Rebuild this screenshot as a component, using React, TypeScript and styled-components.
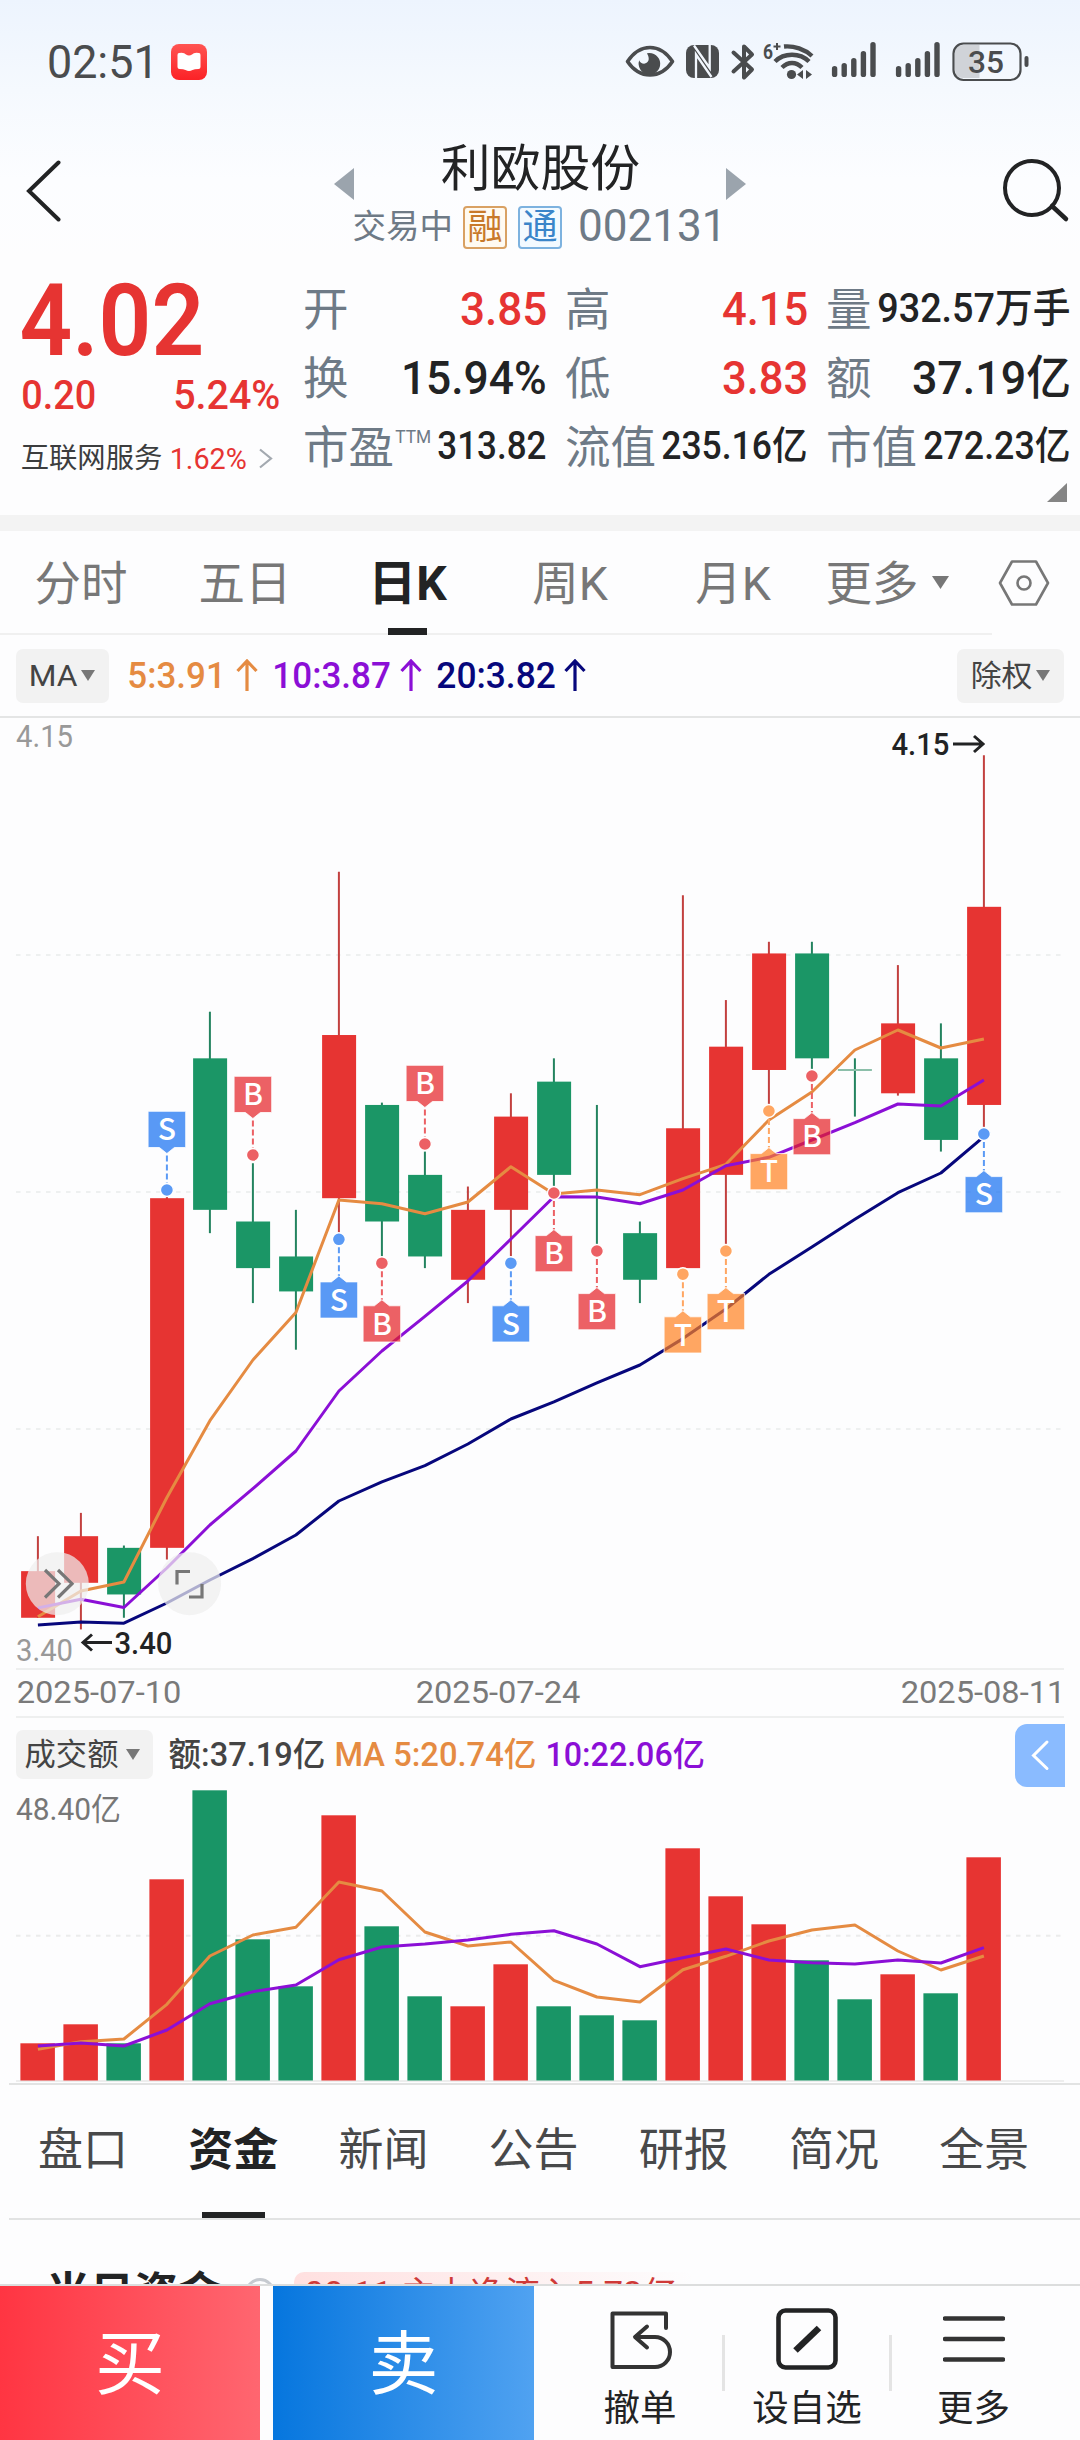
import React, { useLayoutEffect, useRef, useState } from "react";
import styled, { createGlobalStyle } from "styled-components";

const RED = "#e63432";
const GREEN = "#1b9666";
const ORANGE = "#e58b42";
const PURPLE = "#8b0fd6";
const NAVY = "#07077c";
const INK = "#222324";
const FONT = `Roboto, "Noto Sans CJK SC", "Noto Sans", sans-serif`;

const Global = createGlobalStyle`
  * { box-sizing: border-box; }
  body { margin: 0; background: #fdfdfe; font-family: ${FONT}; color: ${INK}; }
  svg { display: block; flex: none; }
`;

/* ---------- text that is squeezed to a fixed ink width ---------- */

const FitBox = styled.span<{ $w: number; $ml: number; $dy: number; $h: number }>`
  display: flex;
  flex: none;
  width: ${(p) => p.$w}px;
  height: ${(p) => p.$h}px;
  margin-left: ${(p) => p.$ml}px;
  margin-top: ${(p) => p.$dy * 2}px;
`;

const FitInner = styled.span<{ $size: number; $weight: number; $color: string }>`
  display: block;
  flex: none;
  white-space: nowrap;
  transform-origin: 0 50%;
  font-size: ${(p) => p.$size}px;
  line-height: ${(p) => Math.round(p.$size * 1.2)}px;
  font-weight: ${(p) => p.$weight};
  color: ${(p) => p.$color};
`;

type FitProps = {
  w: number;
  size: number;
  weight?: number;
  color?: string;
  ml?: number;
  dy?: number;
  children: React.ReactNode;
};

function Fit({ w, size, weight = 400, color = INK, ml = 0, dy = 0, children }: FitProps) {
  const ref = useRef<HTMLSpanElement>(null);
  const [scale, setScale] = useState(1);
  const bearing = size * 0.045;
  useLayoutEffect(() => {
    if (ref.current) setScale((w + bearing * 2) / ref.current.offsetWidth);
  }, [w, bearing]);
  return (
    <FitBox $w={w} $ml={ml} $dy={dy} $h={Math.round(size * 1.2)}>
      <FitInner
        ref={ref}
        $size={size}
        $weight={weight}
        $color={color}
        style={{ transform: `translateX(${-bearing}px) scaleX(${scale})` }}
      >
        {children}
      </FitInner>
    </FitBox>
  );
}

/* ---------- page ---------- */

const Page = styled.div`
  width: 1080px;
  height: 2440px;
  overflow: hidden;
  display: flex;
  flex-direction: column;
  background: linear-gradient(#edf4fe 0, #f5f9fe 90px, #fcfdff 180px, #fdfdfe 260px);
`;

const StatusBar = styled.div`
  height: 124px;
  flex: none;
  display: flex;
  align-items: center;
  padding-left: 49px;
`;

const AppBadge = styled.div`
  margin-left: 14px;
  width: 36px;
  height: 36px;
  border-radius: 8px;
  background: linear-gradient(#ff5452, #fb2226);
  display: flex;
  align-items: center;
  justify-content: center;
`;

const StatusIconsWrap = styled.div`
  margin-left: 418px;
`;

function StatusIcons() {
  const c = "#4a4c4e";
  const bars = (x: number) =>
    [11, 14, 19, 26, 35].map((h, i) => (
      <line key={x + i} x1={x + i * 9.6} x2={x + i * 9.6} y1={36.2 - h + 2.6} y2={33.4} stroke={c} strokeWidth="5.4" strokeLinecap="round" />
    ));
  return (
    <svg width="406" height="42" viewBox="0 0 406 42">
      <path d="M2.500 20.500C9 11 17 6.500 25 6.500s16 4.500 22.500 14C41 30 33 34 25 34S9 30 2.500 20.500Z" fill="none" stroke={c} strokeWidth="3.600" strokeLinejoin="round" />
      <path d="M22 12.200a10.800 10.800 0 1 1-7.800 7c1 3 5 4.800 7.800 2.400 3-2.600 1.500-6.400 0-9.400Z" fill={c} />
      <rect x="61" y="4" width="33" height="33" rx="8" fill={c} />
      <path d="M71 37V13.500L86.500 36M84.700 4V27L69 4.500" fill="none" stroke="#f2f7fe" strokeWidth="2.300" />
      <path d="M108.500 11.500 127 28.500l-8 8v-31l8 8-18.500 17" fill="none" stroke={c} strokeWidth="4" strokeLinejoin="round" strokeLinecap="round" />
      <text x="138" y="17.500" fontSize="21" fontWeight="700" fill={c} textLength="10" lengthAdjust="spacingAndGlyphs">6</text>
      <path d="M148.500 5.500h7M152 2v7" stroke={c} strokeWidth="2" />
      <path d="M159 5.500c10-1 21 3 28 9.500" fill="none" stroke={c} strokeWidth="4.400" />
      <path d="M150 20.500c9-9 25-9 34 0" fill="none" stroke={c} strokeWidth="4.400" />
      <path d="M157 26.500c6-6 14-6 20 0" fill="none" stroke={c} strokeWidth="4.400" />
      <circle cx="166.500" cy="33.500" r="4.600" fill={c} />
      <path d="m172 33.500 6-4.500v9zM187 33.500l-6-4.500v9z" fill={c} />
      {bars(209.6)}
      {bars(273.6)}
      <path d="M354.500 4H338q-8 0-8 8v17q0 8 8 8h16.500Z" fill="#d0d3d8" />
      <rect x="328.500" y="2.500" width="67" height="36.500" rx="10" fill="none" stroke={c} strokeWidth="2.200" />
      <rect x="399.500" y="15" width="4" height="11" rx="2" fill={c} />
      <text x="343" y="32" fontSize="32" fontWeight="500" fill={c} textLength="36" lengthAdjust="spacingAndGlyphs">35</text>
    </svg>
  );
}

const Header = styled.header`
  height: 136px;
  flex: none;
  display: flex;
  align-items: flex-start;
`;

const HeaderIcon = styled.div<{ $ml: number; $mt: number }>`
  margin-left: ${(p) => p.$ml}px;
  margin-top: ${(p) => p.$mt}px;
`;

const TitleBlock = styled.div`
  width: 372px;
  display: flex;
  flex-direction: column;
`;

const Name = styled.div`
  padding-left: 89px;
  padding-top: 15px;
  display: flex;
  height: 80px;
`;

const SubRow = styled.div`
  display: flex;
  align-items: center;
  height: 46px;
`;

const Tag = styled.span<{ $fg: string; $line: string; $bg: string }>`
  width: 44px;
  height: 43px;
  margin-left: 11px;
  border: 2px solid ${(p) => p.$line};
  border-radius: 4px;
  background: ${(p) => p.$bg};
  color: ${(p) => p.$fg};
  font-size: 35px;
  line-height: 39px;
  text-align: center;
  flex: none;
`;

const Quote = styled.section`
  height: 255px;
  flex: none;
  display: flex;
  padding-left: 22px;
`;

const PriceCol = styled.div`
  width: 281px;
  flex: none;
  display: flex;
  flex-direction: column;
`;

const PriceRow = styled.div<{ $h: number }>`
  display: flex;
  align-items: center;
  height: ${(p) => p.$h}px;
`;

const StatGrid = styled.div`
  display: grid;
  grid-template-columns: 242px 241px 243px;
  grid-template-rows: 69px 69px 69px 48px;
  column-gap: 20px;
  padding-top: 15px;
`;

const Stat = styled.div`
  display: flex;
  align-items: center;
  justify-content: space-between;
`;

const StatLabel = styled.span`
  display: flex;
  margin-top: 3px;
  font-size: 45.500px;
  line-height: 56px;
  color: #6e7a86;
`;

const Sup = styled.span`
  align-self: flex-start;
  margin: 5px 0 0 2px;
`;

const Corner = styled.div`
  grid-column: 3;
  width: 20px;
  height: 19px;
  margin: 1px 0 0 221px;
  background: #858585;
  clip-path: polygon(100% 0, 100% 100%, 0 100%);
`;

const Band = styled.div`
  height: 16px;
  flex: none;
  background: #f3f3f3;
`;

/* ---------- period tabs ---------- */

const Periods = styled.nav`
  height: 104px;
  flex: none;
  display: flex;
  padding-left: 35px;
  background: linear-gradient(#f0f0f0, #f0f0f0) 0 100% / 992px 2px no-repeat;
`;

const Period = styled.div<{ $w: number; $gap: number; $on?: boolean }>`
  width: ${(p) => p.$w}px;
  margin-right: ${(p) => p.$gap}px;
  display: flex;
  flex-direction: column;
  align-items: center;
  justify-content: space-between;
  padding-top: 25px;
  color: ${(p) => (p.$on ? INK : "#777")};
  font-weight: ${(p) => (p.$on ? 700 : 400)};
  font-size: ${(p) => (p.$on ? 48 : 46.5)}px;
  line-height: 56px;
  white-space: nowrap;
`;

const Underline = styled.i<{ $w: number; $h: number }>`
  display: block;
  width: ${(p) => p.$w}px;
  height: ${(p) => p.$h}px;
  background: ${INK};
`;

const Caret = styled.i<{ $w: number; $h: number; $ml: number; $mt?: number }>`
  display: block;
  flex: none;
  width: ${(p) => p.$w}px;
  height: ${(p) => p.$h}px;
  margin-left: ${(p) => p.$ml}px;
  margin-top: ${(p) => p.$mt ?? 0}px;
  background: #777;
  clip-path: polygon(0 0, 100% 0, 50% 100%);
`;

/* ---------- indicator bar ---------- */

const IndicatorBar = styled.div`
  height: 83px;
  flex: none;
  display: flex;
  align-items: center;
  padding: 0 16px;
  border-bottom: 2px solid #e4e5e5;
`;

const Chip = styled.div<{ $w: number; $h: number; $ml?: number }>`
  width: ${(p) => p.$w}px;
  height: ${(p) => p.$h}px;
  margin-left: ${(p) => p.$ml ?? 0}px;
  flex: none;
  border-radius: 7px;
  background: #f2f2f2;
  display: flex;
  align-items: center;
`;

const UpArrow = styled.svg<{ $ml: number }>`
  margin-left: ${(p) => p.$ml}px;
`;

const Arrow = ({ color, ml }: { color: string; ml: number }) => (
  <UpArrow width="22" height="33" viewBox="0 0 22 33" $ml={ml}>
    <path d="M11 32V3M1.500 12 11 2l9.500 10" fill="none" stroke={color} strokeWidth="3.200" />
  </UpArrow>
);

/* ---------- chart data ---------- */

type Candle = [up: boolean, high: number, top: number, bottom: number, low: number];

const candles: Candle[] = [
  [true, 3.48, 3.45, 3.41, 3.41],
  [true, 3.5, 3.48, 3.44, 3.4],
  [false, 3.472, 3.47, 3.43, 3.41],
  [true, 3.772, 3.77, 3.47, 3.46],
  [false, 3.93, 3.89, 3.76, 3.74],
  [false, 3.8, 3.75, 3.71, 3.68],
  [false, 3.76, 3.72, 3.69, 3.64],
  [true, 4.05, 3.91, 3.77, 3.74],
  [false, 3.852, 3.85, 3.75, 3.72],
  [false, 3.81, 3.79, 3.72, 3.71],
  [true, 3.78, 3.76, 3.7, 3.68],
  [true, 3.86, 3.84, 3.76, 3.72],
  [false, 3.89, 3.87, 3.79, 3.78],
  [false, 3.85, 3.77, 3.77, 3.73],
  [false, 3.75, 3.74, 3.7, 3.68],
  [true, 4.03, 3.83, 3.71, 3.71],
  [true, 3.94, 3.9, 3.79, 3.73],
  [true, 3.99, 3.98, 3.88, 3.85],
  [false, 3.99, 3.98, 3.89, 3.88],
  [false, 3.89, 3.88, 3.88, 3.84],
  [true, 3.97, 3.92, 3.86, 3.858],
  [false, 3.92, 3.89, 3.82, 3.81],
  [true, 4.15, 4.02, 3.85, 3.83],
];

const ma5 = [1616.8, 1591, 1582, 1497.5, 1420.7, 1360, 1312.5, 1200, 1203.7, 1213.7, 1202, 1166.7, 1194, 1190, 1194.7, 1178.7, 1164.3, 1120, 1092, 1050, 1030, 1048, 1039];
const ma10 = [1607.9, 1599.3, 1607.5, 1568, 1525, 1488.6, 1451, 1391, 1351, 1316.4, 1281, 1239, 1196.7, 1197, 1203.7, 1190, 1165.7, 1157.3, 1140, 1122.7, 1104, 1106, 1080];
const ma20 = [1625, 1622, 1623.2, 1603, 1580, 1558.6, 1535, 1501, 1481.8, 1465.7, 1444, 1419, 1401.8, 1382.9, 1365, 1338.6, 1309, 1274.3, 1247, 1219.3, 1192.7, 1173, 1136.7];

type Mark = [index: number, letter: "S" | "B" | "T", dotY: number, above?: boolean];
const marks: Mark[] = [
  [3, "S", 1190, true],
  [5, "B", 1155, true],
  [9, "B", 1144, true],
  [7, "S", 1239.3],
  [8, "B", 1263.2],
  [11, "S", 1263.2],
  [12, "B", 1193],
  [13, "B", 1251],
  [15, "T", 1274.2],
  [16, "T", 1251],
  [17, "T", 1111],
  [18, "B", 1076],
  [22, "S", 1134],
];
const markSolid = { S: "#5a9af5", B: "#ec6064", T: "#ffa662" };
const markFill = { S: "#136ef1", B: "#e41e23", T: "#ff801f" };

const TOP = 718;
const cx = (i: number) => 37.9 + 43 * i;
const py = (p: number) => 755.3 + (4.15 - p) * 1165.5 - TOP;
const line = (ys: number[], top: number) => ys.map((y, i) => `${cx(i).toFixed(1)},${(y - top).toFixed(1)}`).join(" ");

function Marker({ m }: { m: Mark }) {
  const [i, letter, dot, above] = m;
  const x = cx(i);
  const d = dot - TOP;
  const boxH = 36.2;
  const boxY = above ? d - 78.7 : d + 42.6;
  const l = x - 18.8;
  const r = x + 18.8;
  const shape = above
    ? `M${l} ${boxY}H${r}V${boxY + boxH}H${x + 7.5}L${x} ${boxY + boxH + 6}L${x - 7.5} ${boxY + boxH}H${l}Z`
    : `M${l} ${boxY}H${x - 7.5}L${x} ${boxY - 6}L${x + 7.5} ${boxY}H${r}V${boxY + boxH}H${l}Z`;
  return (
    <g>
      <line x1={x} x2={x} y1={above ? boxY + boxH + 8 : d + 8} y2={above ? d - 6 : boxY - 6} stroke={markSolid[letter]} strokeWidth="2" strokeDasharray="6 3" />
      <circle cx={x} cy={d} r="6.500" fill={markSolid[letter]} stroke="#fff" strokeWidth="1.400" />
      <path d={shape} fill={markFill[letter]} fillOpacity=".7" stroke="#fff" strokeOpacity=".8" strokeWidth="1" strokeLinejoin="round" />
      <text x={x} y={boxY + 28.8} textAnchor="middle" fontSize="30" fontFamily='"Noto Sans CJK SC", sans-serif' fontWeight="500" fill="#fff">
        {letter}
      </text>
    </g>
  );
}

function PriceChart() {
  return (
    <svg width="1080" height="950" viewBox="0 0 1080 950" fontFamily={FONT}>
      {[955, 1192, 1429].map((y) => (
        <line key={y} x1="16" x2="1066" y1={y - TOP} y2={y - TOP} stroke="#eef0f0" strokeWidth="2" strokeDasharray="4.500 5.500" />
      ))}
      <text x="16" y="29" fontSize="31" fill="#999" textLength="57" lengthAdjust="spacingAndGlyphs">4.15</text>
      <text x="16" y="942.500" fontSize="31" fill="#999" textLength="57" lengthAdjust="spacingAndGlyphs">3.40</text>
      {candles.map(([up, high, top, bottom, low], i) => {
        const c = up ? RED : GREEN;
        const x = cx(i);
        const flat = top === bottom;
        return (
          <g key={i}>
            <line x1={x} x2={x} y1={py(high)} y2={py(low)} stroke={up ? "#c2403f" : "#23835f"} strokeWidth="2" />
            {flat ? (
              i === 19 && <line x1={x - 17} x2={x + 17} y1={py(top)} y2={py(top)} stroke="#8cbfaa" strokeWidth="2" />
            ) : (
              <rect x={x - 16.8} y={py(top)} width="34" height={py(bottom) - py(top)} fill={c} />
            )}
          </g>
        );
      })}
      <g fill="none" strokeWidth="3" strokeLinejoin="round">
        <polyline points={line(ma5, TOP)} stroke={ORANGE} />
        <polyline points={line(ma10, TOP)} stroke={PURPLE} />
        <polyline points={line(ma20, TOP)} stroke={NAVY} />
      </g>
      {marks.map((m) => (
        <Marker key={m[0]} m={m} />
      ))}
      <text x="891.500" y="37" fontSize="31" fontWeight="500" fill={INK} textLength="58" lengthAdjust="spacingAndGlyphs">4.15</text>
      <path d="M953 26h29M974 18l9 8-9 8" fill="none" stroke={INK} strokeWidth="3" />
      <text x="114.500" y="935.500" fontSize="31" fontWeight="500" fill={INK} textLength="58" lengthAdjust="spacingAndGlyphs">3.40</text>
      <path d="M112 924.500H84M92 916.500l-9 8 9 8" fill="none" stroke={INK} strokeWidth="3" />
      <g fill="none" stroke="#777" strokeWidth="3.200">
        <circle cx="57.300" cy="865.700" r="31.500" fill="#efefef" fillOpacity=".72" stroke="none" />
        <path d="m45 852 14 13.700L45 879.500M58 852l14 13.700-14 13.800" />
        <circle cx="189.600" cy="865.700" r="31.500" fill="#efefef" fillOpacity=".72" stroke="none" />
        <path d="M177 866.500V853.500h13M202 866v13h-13" />
      </g>
    </svg>
  );
}

const DateRow = styled.div`
  height: 50px;
  flex: none;
  margin: 0 16px;
  border-top: 2px solid #eeefef;
  border-bottom: 2px solid #eeefef;
  display: flex;
  align-items: center;
  padding-bottom: 1px;
`;

/* ---------- volume ---------- */

const VolHead = styled.div`
  height: 73px;
  flex: none;
  display: flex;
  align-items: center;
  padding-left: 16px;
`;

const SideTab = styled.div`
  width: 50px;
  height: 63px;
  margin-left: 312px;
  margin-top: 1px;
  border-radius: 12px 0 0 12px;
  background: #8abbff;
  display: flex;
  align-items: center;
  justify-content: center;
`;

const VTOP = 1791;
const volumes: [boolean, number][] = [
  [true, 2043.3], [true, 2024.3], [false, 2043.3], [true, 1879.3], [false, 1790.3], [false, 1939.3],
  [false, 1986.3], [true, 1815.3], [false, 1926.3], [false, 1996.3], [true, 2006.3], [true, 1964.3],
  [false, 2006.3], [false, 2015.3], [false, 2020.3], [true, 1848.3], [true, 1896.3], [true, 1924.3],
  [false, 1960.3], [false, 1999.3], [true, 1974.3], [false, 1993.3], [true, 1857.3],
];
const vma5 = [2049.3, 2041.7, 2039, 2004.3, 1956, 1935, 1927.3, 1882, 1891, 1932, 1946, 1942, 1980.3, 1997, 2002, 1969.7, 1956.3, 1941, 1930, 1925, 1951, 1970, 1956];
const vma10 = [2046, 2043, 2046, 2030, 2003.7, 1991.7, 1985, 1959.7, 1947, 1944, 1940, 1934.3, 1930.7, 1944, 1966.7, 1957.7, 1949, 1960, 1962.7, 1964, 1960, 1963, 1947.7];

function VolumeChart() {
  return (
    <svg width="1080" height="292" viewBox="0 0 1080 292" overflow="visible" fontFamily={FONT}>
      <line x1="16" x2="1066" y1="144.700" y2="144.700" stroke="#ebecec" strokeWidth="2" strokeDasharray="4.500 5.500" />
      <line x1="16" x2="1064" y1="290" y2="290" stroke="#eeeeee" strokeWidth="2" />
      <text x="16" y="29" fontSize="31" fill="#777" textLength="105" lengthAdjust="spacingAndGlyphs">48.40亿</text>
      {volumes.map(([up, y], i) => (
        <rect key={i} x={cx(i) - 17.5} y={y - VTOP} width="34.500" height={2080.5 - y} fill={up ? "#e73432" : "#199566"} />
      ))}
      <g fill="none" strokeWidth="3" strokeLinejoin="round">
        <polyline points={line(vma5, VTOP)} stroke={ORANGE} />
        <polyline points={line(vma10, VTOP)} stroke={PURPLE} />
      </g>
    </svg>
  );
}

/* ---------- info tabs ---------- */

const InfoTabs = styled.nav`
  margin-left: 9px;
  height: 137px;
  flex: none;
  border-top: 2px solid #e2e3e3;
  border-bottom: 2px solid #e2e3e3;
  display: flex;
  padding-left: 29px;
  gap: 60.200px;
`;

const InfoTab = styled.div<{ $on?: boolean }>`
  width: 90px;
  flex: none;
  display: flex;
  flex-direction: column;
  align-items: center;
  justify-content: space-between;
  padding-top: 39px;
  font-size: 45px;
  line-height: 54px;
  color: ${(p) => (p.$on ? INK : "#48494a")};
  font-weight: ${(p) => (p.$on ? 700 : 400)};
`;

const FundRow = styled.div`
  height: 64px;
  flex: none;
  overflow: hidden;
  display: flex;
  align-items: flex-start;
  padding: 46px 0 0 46px;
`;

const FundTitle = styled.div`
  font-size: 44px;
  line-height: 56px;
  font-weight: 700;
  width: 199px;
`;

const Hint = styled.div`
  width: 30px;
  height: 30px;
  margin-top: 12px;
  border: 3px solid #c6cad0;
  border-radius: 50%;
`;

const FundPill = styled.div`
  margin-left: 19px;
  margin-top: 6px;
  width: 400px;
  height: 52px;
  border-radius: 10px;
  background: linear-gradient(90deg, #ffe0e0, #fdfdfe);
  padding: 2px 0 0 12px;
`;

/* ---------- bottom bar ---------- */

const Bottom = styled.footer`
  height: 156px;
  flex: none;
  border-top: 2px solid #dcdddd;
  display: flex;
  background: #fdfdfe;
`;

const Trade = styled.button<{ $from: string; $to: string; $w: number }>`
  width: ${(p) => p.$w}px;
  flex: none;
  border: 0;
  margin-right: 13px;
  padding: 3px 0 0;
  background: linear-gradient(90deg, ${(p) => p.$from}, ${(p) => p.$to});
  color: #fff;
  font: 400 70px/84px ${FONT};
`;

const Action = styled.div<{ $w: number; $pl?: number }>`
  width: ${(p) => p.$w}px;
  padding-left: ${(p) => p.$pl ?? 0}px;
  display: flex;
  flex-direction: column;
  align-items: center;
  padding-top: 20px;
  font-size: 36.500px;
  line-height: 46px;
`;

const ActionIcon = styled.div`
  height: 80px;
`;

const Sep = styled.i`
  width: 3px;
  height: 56px;
  margin-top: 49px;
  background: #e4e4e4;
`;

const stats: [string, string, number, number, string][] = [
  ["开", "3.85", 83, 47, RED],
  ["高", "4.15", 82, 47, RED],
  ["量", "932.57万手", 190, 40, INK],
  ["换", "15.94%", 142, 47, INK],
  ["低", "3.83", 82, 47, RED],
  ["额", "37.19亿", 155, 47, INK],
  ["市盈", "313.82", 106, 39, INK],
  ["流值", "235.16亿", 143, 39, INK],
  ["市值", "272.23亿", 144, 39, INK],
];

const dates: [string, number][] = [
  ["2025-07-10", 2],
  ["2025-07-24", 237],
  ["2025-08-11", 323],
];

export default function App() {
  return (
    <Page>
      <Global />
      <StatusBar>
        <Fit w={108} size={46} color="#4a4c4e">02:51</Fit>
        <AppBadge>
          <svg width="24" height="20" viewBox="0 0 24 20">
            <path d="M2 1q5-1 7 1.500 3 2 6 0Q17 0 22 1q1.500 0 1.500 2v12q0 2-2 2-4 0-6 1-3.500 2-7 0-2-1-6-1-2 0-2-2V3Q.5 1 2 1Z" fill="#fff" />
          </svg>
        </AppBadge>
        <StatusIconsWrap>
          <StatusIcons />
        </StatusIconsWrap>
      </StatusBar>

      <Header>
        <HeaderIcon $ml={25} $mt={36}>
          <svg width="38" height="62" viewBox="0 0 38 62">
            <path d="M33.500 2.500 4 31l29.500 28.500" fill="none" stroke={INK} strokeWidth="4" strokeLinecap="round" />
          </svg>
        </HeaderIcon>
        <HeaderIcon $ml={271} $mt={44}>
          <svg width="20" height="32" viewBox="0 0 20 32"><path d="M20 0v32L0 16Z" fill="#9ba4ad" /></svg>
        </HeaderIcon>
        <TitleBlock>
          <Name>
            <Fit w={195} size={50}>利欧股份</Fit>
          </Name>
          <SubRow>
            <Fit w={98} size={33.5} color="#6e7a86">交易中</Fit>
            <Tag $fg="#c8792a" $line="#d9a163" $bg="#fffaf1">融</Tag>
            <Tag $fg="#3a85c9" $line="#7db2df" $bg="#f3faff">通</Tag>
            <Fit w={145} size={43.5} ml={18} dy={-0.5} color="#6e7a86">002131</Fit>
          </SubRow>
        </TitleBlock>
        <HeaderIcon $ml={0} $mt={44}>
          <svg width="20" height="32" viewBox="0 0 20 32"><path d="M0 0v32l20-16Z" fill="#9ba4ad" /></svg>
        </HeaderIcon>
        <HeaderIcon $ml={256} $mt={34}>
          <svg width="68" height="66" viewBox="0 0 68 66">
            <circle cx="30" cy="30" r="27" fill="none" stroke={INK} strokeWidth="4" />
            <path d="m50 48 14 13" stroke={INK} strokeWidth="4.500" strokeLinecap="round" />
          </svg>
        </HeaderIcon>
      </Header>

      <Quote>
        <PriceCol>
          <PriceRow $h={119}>
            <Fit w={176} size={101} weight={600} color={RED} ml={2} dy={0.5}>4.02</Fit>
          </PriceRow>
          <PriceRow $h={33}>
            <Fit w={71} size={41} weight={500} color={RED} ml={1}>0.20</Fit>
            <Fit w={104} size={41} weight={500} color={RED} ml={81}>5.24%</Fit>
          </PriceRow>
          <PriceRow $h={93}>
            <Fit w={139} size={28} color="#3c3d3e">互联网服务</Fit>
            <Fit w={74} size={30} color={RED} ml={10}>1.62%</Fit>
            <HeaderIcon $ml={13} $mt={0}>
              <svg width="15" height="21" viewBox="0 0 15 21"><path d="m2 1.500 11 9-11 9" fill="none" stroke="#a3a9b0" strokeWidth="2.200" /></svg>
            </HeaderIcon>
          </PriceRow>
        </PriceCol>
        <StatGrid>
          {stats.map(([label, value, w, size, color]) => (
            <Stat key={label}>
              <StatLabel>
                {label}
                {label === "市盈" && (
                  <Sup><Fit w={34} size={18} color="#6e7a86">TTM</Fit></Sup>
                )}
              </StatLabel>
              <Fit w={w} size={size} weight={500} color={color} dy={-1}>{value}</Fit>
            </Stat>
          ))}
          <Corner />
        </StatGrid>
      </Quote>
      <Band />

      <Periods>
        <Period $w={92} $gap={72}>分时</Period>
        <Period $w={92} $gap={77}>五日</Period>
        <Period $w={79} $gap={84} $on>日K<Underline $w={39} $h={7} /></Period>
        <Period $w={78} $gap={85}>周K</Period>
        <Period $w={78} $gap={54}>月K</Period>
        <Period $w={92} $gap={14}>更多</Period>
        <Caret $w={17} $h={13} $ml={0} $mt={45} />
        <HeaderIcon $ml={49} $mt={28}>
          <svg width="52" height="48" viewBox="0 0 52 48">
            <path d="M14 2.500h24L50 24 38 45.500H14L2 24Z" fill="none" stroke="#777" strokeWidth="2.600" strokeLinejoin="round" />
            <circle cx="26" cy="24" r="6.500" fill="none" stroke="#777" strokeWidth="2.600" />
          </svg>
        </HeaderIcon>
      </Periods>

      <IndicatorBar>
        <Chip $w={93} $h={54}>
          <Fit w={46} size={30} ml={14} color="#444">MA</Fit>
          <Caret $w={14} $h={11} $ml={5} />
        </Chip>
        <Fit w={95} size={37} weight={500} ml={20} color={ORANGE}>5:3.91</Fit>
        <Arrow color={ORANGE} ml={12} />
        <Fit w={115} size={37} weight={500} ml={16} color={PURPLE}>10:3.87</Fit>
        <Arrow color={PURPLE} ml={11} />
        <Fit w={116} size={37} weight={500} ml={16} color={NAVY}>20:3.82</Fit>
        <Arrow color={NAVY} ml={10} />
        <Chip $w={107} $h={54} $ml={371}>
          <Fit w={59} size={30} ml={15} color="#444">除权</Fit>
          <Caret $w={14} $h={11} $ml={5} />
        </Chip>
      </IndicatorBar>

      <PriceChart />

      <DateRow>
        {dates.map(([d, ml]) => (
          <Fit key={d} w={162} ml={ml} size={30.5} color="#7a7a7a">{d}</Fit>
        ))}
      </DateRow>

      <VolHead>
        <Chip $w={137} $h={49}>
          <Fit w={91} size={31} ml={10} color="#444">成交额</Fit>
          <Caret $w={14} $h={11} $ml={9} />
        </Chip>
        <Fit w={154} size={33} weight={500} ml={17} color="#444">额:37.19亿</Fit>
        <Fit w={199} size={33} weight={500} ml={12} color={ORANGE}>MA 5:20.74亿</Fit>
        <Fit w={156} size={33} weight={500} ml={12} color={PURPLE}>10:22.06亿</Fit>
        <SideTab>
          <svg width="20" height="32" viewBox="0 0 20 32"><path d="M17 3 3.500 16.500 17 29.500" fill="none" stroke="#fff" strokeWidth="3" strokeLinecap="round" /></svg>
        </SideTab>
      </VolHead>
      <VolumeChart />

      <InfoTabs>
        {["盘口", "资金", "新闻", "公告", "研报", "简况", "全景"].map((t) => (
          <InfoTab key={t} $on={t === "资金"}>
            {t}
            {t === "资金" && <Underline $w={63} $h={6} />}
          </InfoTab>
        ))}
      </InfoTabs>

      <FundRow>
        <FundTitle>当日资金</FundTitle>
        <Hint />
        <FundPill>
          <Fit w={370} size={33} color="#cf3a38">08-11 主力净流入5.73亿</Fit>
        </FundPill>
      </FundRow>

      <Bottom>
        <Trade $w={260} $from="#ff3542" $to="#ff6670">买</Trade>
        <Trade $w={261} $from="#0676de" $to="#50a2f1">卖</Trade>
        <Action $w={175} $pl={11}>
          <ActionIcon>
            <svg width="64" height="66" viewBox="0 0 64 66">
              <path d="M58 22V7.500H4.500V61H47a14.500 14.500 0 0 0 0-30H28M39 20.500 27 31l12 10.500" fill="none" stroke="#333" strokeWidth="4" strokeLinejoin="round" strokeLinecap="round" />
            </svg>
          </ActionIcon>
          撤单
        </Action>
        <Sep />
        <Action $w={164}>
          <ActionIcon>
            <svg width="62" height="66" viewBox="0 0 62 66">
              <rect x="2.500" y="4.500" width="57" height="57" rx="7" fill="none" stroke={INK} strokeWidth="4.600" />
              <path d="M19.500 44.500 43 22" stroke={INK} strokeWidth="6.500" />
            </svg>
          </ActionIcon>
          设自选
        </Action>
        <Sep />
        <Action $w={163}>
          <ActionIcon>
            <svg width="62" height="66" viewBox="0 0 62 66">
              <path d="M2 12.500h58M2 33h58M2 53.500h58" stroke="#333" strokeWidth="4.600" strokeLinecap="round" />
            </svg>
          </ActionIcon>
          更多
        </Action>
      </Bottom>
    </Page>
  );
}
